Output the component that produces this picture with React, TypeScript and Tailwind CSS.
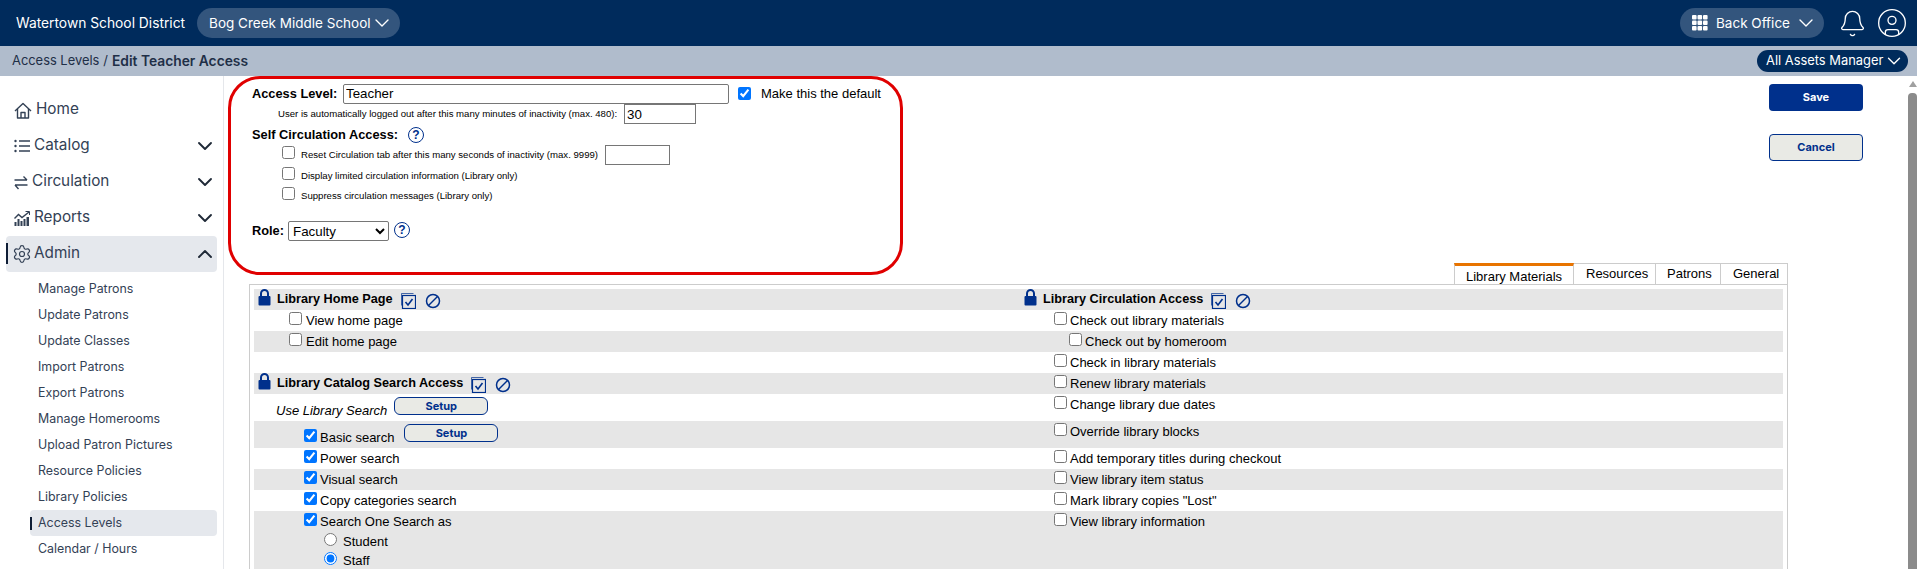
import React from "react";
import { ChevronDown, ChevronUp, Bell, CircleUser, Settings } from "lucide-react";

const nav = "[font-family:Inter,sans-serif]";

function HomeIcon() {
  return (
    <svg width="18" height="17" viewBox="0 0 18 17" fill="none" stroke="currentColor" strokeWidth="1.4" strokeLinejoin="round">
      <path d="M1 9l8-7.5L17 9" />
      <path d="M3.5 7v9h11V7" />
      <path d="M7 16v-5.500h4V16" />
    </svg>
  );
}
function ListIcon() {
  return (
    <svg width="16" height="14" viewBox="0 0 16 14" fill="none" stroke="currentColor" strokeWidth="1.5">
      <path d="M5 2h11M5 7h11M5 12h11" />
      <circle cx="1.500" cy="2" r="1.200" fill="currentColor" stroke="none" />
      <circle cx="1.500" cy="7" r="1.200" fill="currentColor" stroke="none" />
      <circle cx="1.500" cy="12" r="1.200" fill="currentColor" stroke="none" />
    </svg>
  );
}
function ArrowsIcon() {
  return (
    <svg width="14" height="15" viewBox="0 0 14 15" fill="none" stroke="currentColor" strokeWidth="1.4">
      <path d="M0.500 5H13M9.500 1.500L13 5 M13.500 10H1M4.500 14L1 10" />
    </svg>
  );
}
function Reports() {
  return (
    <svg width="16" height="15" viewBox="0 0 16 15" fill="none">
      <path d="M0.500 7.500l4-4 3.500 3L15 1" stroke="currentColor" strokeWidth="1.400" />
      <path d="M11.500 0.500H15.500V4" stroke="currentColor" strokeWidth="1" />
      <path d="M0.500 15v-4h2v4zM3.500 15V8h2v7zM6.500 15v-5h2v5zM9.500 15V8h2v7zM12.500 15V6h2.500v9z" fill="currentColor" />
    </svg>
  );
}
function Lock() {
  return (
    <svg width="13" height="17" viewBox="0 0 13 17">
      <path d="M3 8V4.500a3.500 3.500 0 017 0V8" fill="none" stroke="#00308c" strokeWidth="2" />
      <rect x="0.500" y="7" width="12" height="9.500" rx="1" fill="#00308c" />
    </svg>
  );
}
function CheckAll() {
  return (
    <svg width="16" height="16" viewBox="0 0 16 16" fill="none" stroke="#00308c" strokeWidth="1">
      <path d="M1.500 12.500V0.500h12" strokeOpacity="0.7" />
      <rect x="2.500" y="2.500" width="13" height="13" strokeWidth="1.200" />
      <path d="M5.500 9l2.500 3 4.500-6" strokeWidth="1.600" />
    </svg>
  );
}
function Ban() {
  return (
    <svg width="16" height="16" viewBox="0 0 16 16" fill="none" stroke="#00308c" strokeWidth="1.500">
      <circle cx="8" cy="8" r="6.500" />
      <path d="M3.500 12.500l9-9" />
    </svg>
  );
}
function Help() {
  return (
    <span className="inline-flex h-[16px] w-[16px] items-center justify-center rounded-full border-[1.5px] border-[#00308c] text-[12px] font-bold text-[#00308c]">?</span>
  );
}
function Grid() {
  return (
    <svg width="16" height="16" viewBox="0 0 16 16" fill="white">
      {[0, 5.5, 11].flatMap((y) => [0, 5.5, 11].map((x) => <rect key={`${x}-${y}`} x={x} y={y} width="4.6" height="4.6" rx="1" />))}
    </svg>
  );
}

function NavRow({ icon, label, chevron, active }: { icon: React.ReactNode; label: string; chevron?: "up" | "down"; active?: boolean }) {
  return (
    <div className={`relative mx-[6px] flex h-[36px] items-center gap-[4px] rounded-[4px] pl-[8px] text-[15.300px] text-[#334155] ${active ? "bg-[#e5e8ed]" : ""}`}>
      {active && <span className="absolute left-0 top-[7px] h-[21px] w-[2px] bg-[#0f1e36]" />}
      {icon}
      <span className="-mt-[2px]">{label}</span>
      {chevron === "down" && <ChevronDown size={24} strokeWidth={1.900} className="ml-auto text-[#1f2937]" />}
      {chevron === "up" && <ChevronUp size={24} strokeWidth={1.900} className="ml-auto text-[#1f2937]" />}
    </div>
  );
}

const subs = ["Manage Patrons", "Update Patrons", "Update Classes", "Import Patrons", "Export Patrons", "Manage Homerooms", "Upload Patron Pictures", "Resource Policies", "Library Policies", "Access Levels", "Calendar / Hours"];

function Sidebar() {
  return (
    <aside className={`w-[224px] shrink-0 border-r border-[#e5e7eb] pt-[16px] ${nav}`}>
      <NavRow icon={<HomeIcon />} label="Home" />
      <NavRow icon={<ListIcon />} label="Catalog" chevron="down" />
      <NavRow icon={<ArrowsIcon />} label="Circulation" chevron="down" />
      <NavRow icon={<Reports />} label="Reports" chevron="down" />
      <NavRow icon={<Settings size={20} strokeWidth={1.4} className="-mx-[2px]" />} label="Admin" chevron="up" active />
      <div className="mt-[4px]">
        {subs.map((s) => (
          <div key={s} className={`relative ml-[30px] mr-[6px] flex h-[26px] items-center rounded-[4px] pl-[8px] text-[12.400px] text-[#334155] ${s === "Access Levels" ? "bg-[#e5e8ed]" : ""}`}>
            {s === "Access Levels" && <span className="absolute left-0 top-[7px] h-[13px] w-[2px] bg-[#0f1e36]" />}
            {s}
          </div>
        ))}
      </div>
    </aside>
  );
}

function Form() {
  return (
    <div className="ml-[4px] h-[199px] w-[675px] shrink-0 rounded-[32px] border-[3px] border-[#e00000] pl-[21px] pt-[4px] text-[13px] text-black">
      <div className="flex h-[21px] items-center">
        <b className="w-[91px] text-[12.800px]">Access Level:</b>
        <input defaultValue="Teacher" className="h-[20px] w-[386px] rounded-[2px] border border-[#767676] px-[2px] text-[13.330px]" />
        <input type="checkbox" defaultChecked className="ml-[9px]" />
        <span className="ml-[10px]">Make this the default</span>
      </div>
      <div className="flex h-[20px] items-center pl-[26px] text-[9.600px]">
        <span className="w-[346px] whitespace-nowrap">User is automatically logged out after this many minutes of inactivity (max. 480):</span>
        <input defaultValue="30" className="h-[20px] w-[72px] border border-[#767676] px-[2px] text-[13.330px]" />
      </div>
      <div className="mt-[2px] flex h-[18px] items-center">
        <b className="text-[12.800px]">Self Circulation Access:</b>
        <span className="ml-[10px]"><Help /></span>
      </div>
      <div className="mt-[1px] flex h-[20px] items-center pl-[30px] text-[9.600px]">
        <input type="checkbox" className="-mt-[6px]" />
        <span className="ml-[6px] mt-[1px]">Reset Circulation tab after this many seconds of inactivity (max. 9999)</span>
        <input className="ml-[7px] h-[20px] w-[65px] border border-[#767676]" />
      </div>
      <div className="flex h-[20px] items-center pl-[30px] text-[9.600px]">
        <input type="checkbox" className="-mt-[4px]" />
        <span className="ml-[6px] mt-[2px]">Display limited circulation information (Library only)</span>
      </div>
      <div className="flex h-[20px] items-center pl-[30px] text-[9.600px]">
        <input type="checkbox" className="-mt-[4px]" />
        <span className="ml-[6px] mt-[2px]">Suppress circulation messages (Library only)</span>
      </div>
      <div className="mt-[16px] flex h-[20px] items-center">
        <b className="text-[12.800px]">Role:</b>
        <select className="ml-[4px] h-[20px] w-[101px] rounded-[2px] border border-[#767676] text-[13.330px]" defaultValue="Faculty">
          <option>Faculty</option>
        </select>
        <span className="-mt-[2px] ml-[5px]"><Help /></span>
      </div>
    </div>
  );
}

function Heading({ title, className }: { title: string; className?: string }) {
  return (
    <div className={`flex items-center ${className ?? ""}`}>
      <span className="-mt-[5px]"><Lock /></span>
      <b className="ml-[6px] text-[12.700px]">{title}</b>
      <span className="ml-[7px] mt-[2px] flex items-center"><CheckAll /></span>
      <span className="ml-[9px] mt-[3px] flex items-center"><Ban /></span>
    </div>
  );
}

function Cb({ label, checked, indent, gap = "ml-[3px]" }: { label: string; checked?: boolean; indent: string; gap?: string }) {
  return (
    <div className={`flex h-[21px] items-center ${indent}`}>
      <input type="checkbox" defaultChecked={checked} className="-mt-[4px]" />
      <span className={gap}>{label}</span>
    </div>
  );
}

function SetupBtn({ ml }: { ml: string }) {
  return (
    <button className={`mt-[3px] h-[18px] w-[94px] self-start rounded-[6px] border border-[#00308c] bg-[#e9eae5] text-[11px] font-bold text-[#00308c] ${ml} ${nav}`}>Setup</button>
  );
}

function Row({ left, right, gray, h }: { left?: React.ReactNode; right?: React.ReactNode; gray?: boolean; h: string }) {
  return (
    <div className={`flex items-start ${h} ${gray ? "bg-[#e6e6e6]" : ""}`}>
      <div className="flex h-full w-[769px] shrink-0 items-end">{left}</div>
      <div className="min-w-0 flex-1">{right}</div>
    </div>
  );
}

function Table() {
  const L = "pl-[35px]";
  const L2 = "pl-[50px]";
  const R = "pl-[31px]";
  return (
    <div className="text-[13px] text-black">
      <div className="flex justify-end pr-[1px]">
        <div className="h-[21px] w-[120px] border-x border-[#ccc] border-t-[3px] border-t-[#e87400] bg-white pl-[11px] pt-[1px]">Library Materials</div>
        <div className="h-[21px] w-[82px] border-r border-t border-[#ccc] pl-[12px]">Resources</div>
        <div className="h-[21px] w-[65px] border-r border-t border-[#ccc] pl-[11px]">Patrons</div>
        <div className="h-[21px] w-[67px] border-r border-t border-[#ccc] pl-[12px]">General</div>
      </div>
      <div className="mr-[1px] h-[300px] border-x border-t border-[#ccc] px-[4px] pt-[4px]">
        <Row gray h="h-[21px]" left={<Heading title="Library Home Page" className="h-[21px] pl-[4px]" />} right={<Heading title="Library Circulation Access" className="h-[21px] pl-[1px]" />} />
        <Row h="h-[21px]" left={<Cb label="View home page" indent={L} gap="ml-[4px]" />} right={<Cb label="Check out library materials" indent={R} />} />
        <Row gray h="h-[21px]" left={<Cb label="Edit home page" indent={L} gap="ml-[4px]" />} right={<Cb label="Check out by homeroom" indent="pl-[46px]" />} />
        <Row h="h-[21px]" right={<Cb label="Check in library materials" indent={R} />} />
        <Row gray h="h-[21px]" left={<Heading title="Library Catalog Search Access" className="h-[21px] pl-[4px]" />} right={<Cb label="Renew library materials" indent={R} />} />
        <Row h="h-[27px]" left={<><i className="flex h-[21px] items-center pl-[22px]">Use Library Search</i><SetupBtn ml="ml-[7px]" /></>} right={<Cb label="Change library due dates" indent={R} />} />
        <Row gray h="h-[27px]" left={<><Cb label="Basic search" checked indent={L2} /><SetupBtn ml="ml-[10px]" /></>} right={<Cb label="Override library blocks" indent={R} />} />
        <Row h="h-[21px]" left={<Cb label="Power search" checked indent={L2} />} right={<Cb label="Add temporary titles during checkout" indent={R} />} />
        <Row gray h="h-[21px]" left={<Cb label="Visual search" checked indent={L2} />} right={<Cb label="View library item status" indent={R} />} />
        <Row h="h-[21px]" left={<Cb label="Copy categories search" checked indent={L2} />} right={<Cb label={'Mark library copies "Lost"'} indent={R} />} />
        <div className="flex h-[60px] items-start bg-[#e6e6e6]">
          <div className="w-[769px] shrink-0">
            <Cb label="Search One Search as" checked indent={L2} />
            <div className="flex h-[19px] items-center pl-[70px]"><input type="radio" name="s" className="-mt-[4px]" /><span className="ml-[6px]">Student</span></div>
            <div className="flex h-[19px] items-center pl-[70px]"><input type="radio" name="s" defaultChecked className="-mt-[4px]" /><span className="ml-[6px]">Staff</span></div>
          </div>
          <div className="flex-1"><Cb label="View library information" indent={R} /></div>
        </div>
      </div>
    </div>
  );
}

export default function App() {
  return (
    <div className="flex h-[569px] flex-col overflow-hidden bg-white [font-family:'Liberation_Sans',Arial,sans-serif]">
      <header className={`flex h-[46px] shrink-0 items-center bg-[#002b5c] pl-[16px] pr-[9px] text-[13.500px] text-white ${nav}`}>
        <span className="text-[13.800px]">Watertown School District</span>
        <button className="ml-[12px] flex h-[30px] w-[203px] items-center rounded-full bg-[#33557d] pl-[12px]">
          Bog Creek Middle School <ChevronDown size={24} strokeWidth={1.400} className="-ml-[1px]" />
        </button>
        <button className="ml-auto flex h-[30px] w-[144px] items-center rounded-full bg-[#33557d] pl-[12px]">
          <Grid /> <span className="ml-[8px]">Back Office</span> <ChevronDown size={24} strokeWidth={1.400} className="ml-[4px]" />
        </button>
        <Bell size={29} strokeWidth={1.1} className="ml-[14px]" />
        <CircleUser size={32} strokeWidth={1} className="ml-[9px]" />
      </header>
      <div className={`flex h-[30px] shrink-0 items-center bg-[#b0bccc] pl-[12px] pr-[9px] text-[12.900px] text-[#1f2f47] ${nav}`}>
        <span>Access Levels</span>
        <span className="ml-[4px]">/</span>
        <b className="ml-[4px] text-[13.800px] font-semibold">Edit Teacher Access</b>
        <button className="ml-auto flex h-[22px] w-[151px] items-center rounded-full bg-[#002b5c] pl-[9px] text-white">
          All Assets Manager <ChevronDown size={22} strokeWidth={1.500} />
        </button>
      </div>
      <div className="flex min-h-0 flex-1">
        <Sidebar />
        <main className="min-w-0 flex-1">
          <div className="flex">
            <Form />
            <div className={`ml-auto mr-[45px] flex flex-col pt-[8px] text-[11px] font-bold ${nav}`}>
              <button className="h-[27px] w-[94px] rounded-[4px] bg-[#00308c] text-white">Save</button>
              <button className="mt-[23px] h-[27px] w-[94px] rounded-[4px] border border-[#00308c] bg-[#e9eae5] text-[#00308c]">Cancel</button>
            </div>
          </div>
          <div className="-mt-[12px] ml-[25px] mr-[119px]"><Table /></div>
        </main>
        <div className="flex w-[9px] shrink-0 flex-col items-center pt-[5px]">
          <span className="h-0 w-0 border-x-[4px] border-b-[6px] border-x-transparent border-b-[#a0a0a0]" />
          <span className="mt-[6px] w-full flex-1 rounded-t-[4px] bg-[#8b8b8b]" />
        </div>
      </div>
    </div>
  );
}
